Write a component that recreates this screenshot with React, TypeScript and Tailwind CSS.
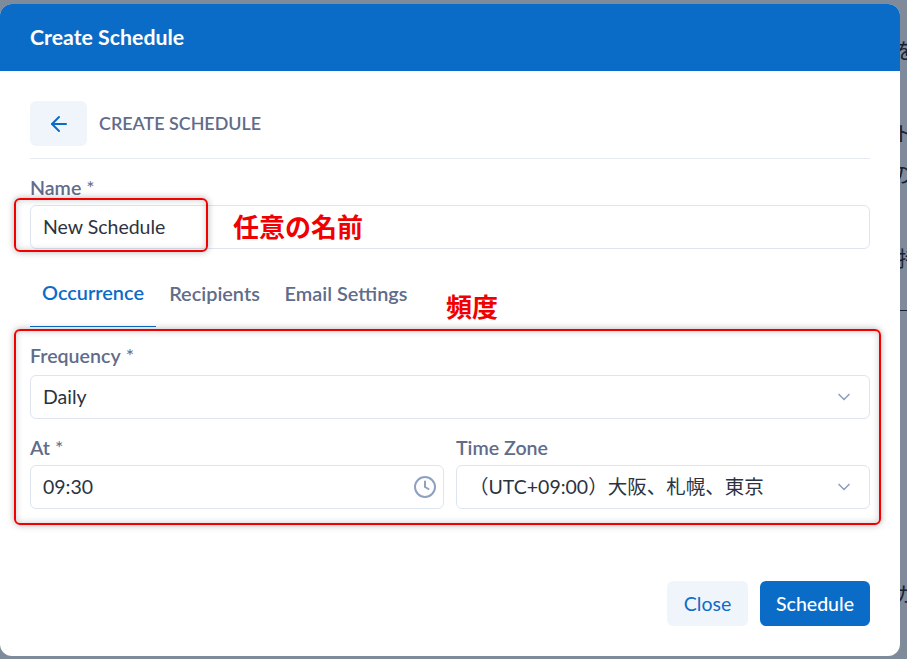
import { ArrowLeft, ChevronDown } from "lucide-react";

const FONT = "font-['Lato','Noto_Sans_CJK_JP',sans-serif]";

function Label({ text, required }: { text: string; required?: boolean }) {
  return (
    <div className="h-[22px] text-[19.6px] leading-[22px] font-semibold text-[#5f6c8a]">
      {text}
      {required && <span className="font-normal"> *</span>}
    </div>
  );
}

function Field({ children }: { children: React.ReactNode }) {
  return (
    <div className="flex h-[44px] items-center rounded-[6px] border border-[#dde5f1] bg-white pl-[12px] pr-[15px] text-[19.5px] text-[#2c3340]">
      {children}
    </div>
  );
}

function BackgroundGlyphs() {
  return (
    <div className="absolute inset-y-0 left-[900px] right-0 overflow-hidden text-[21px] leading-none text-[#1a2030]">
      <span className="absolute left-[-5px] top-[39px]">を</span>
      <span className="absolute left-[-7px] top-[122px]">ト</span>
      <span className="absolute left-[-9px] top-[163px]">の</span>
      <span className="absolute left-[-2px] top-[247px]">持</span>
      <span className="absolute left-[-6px] top-[583px]">カ</span>
      <div className="absolute left-0 top-[310px] h-px w-full bg-[#1a2030]" />
    </div>
  );
}

export default function App() {
  return (
    <div className={`relative h-[659px] w-[907px] overflow-hidden bg-[#7f8a9b] pt-[4px] ${FONT}`}>
      <BackgroundGlyphs />

      <div className="relative flex h-[652px] w-[900px] flex-col overflow-hidden rounded-[12px] bg-white">
        <div className="flex h-[67px] items-center bg-[#0b6cc8] px-[30px] pt-[1px] text-[21.3px] font-bold text-white">
          Create Schedule
        </div>

        <div className="flex flex-1 flex-col px-[30px] pt-[30px]">
          <div className="flex h-[45px] items-center gap-[12px]">
            <button
              type="button"
              className="flex h-[45px] w-[57px] items-center justify-center rounded-[6px] bg-[#f0f5fc] text-[#0b6cc8]"
            >
              <ArrowLeft className="h-[24px] w-[24px]" strokeWidth={2} />
            </button>
            <span className="pb-[1px] text-[17.9px] font-semibold text-[#5f6c8a]">CREATE SCHEDULE</span>
          </div>
          <div className="mt-[12px] h-px bg-[#e6eaf3]" />

          <div className="mt-[18px]">
            <Label text="Name" required />
          </div>
          <div className="mt-[6px]">
            <Field>New Schedule</Field>
          </div>

          <div className="mt-[11px] flex h-[67px] gap-px text-[19.9px] font-semibold">
            <div className="flex w-[126px] items-center justify-center border-b-[1.5px] border-[#0b6cc8] text-[#0b6cc8]">
              Occurrence
            </div>
            <div className="flex w-[115px] items-center justify-center text-[#5f6c8a]">Recipients</div>
            <div className="flex w-[146px] items-center justify-center text-[#5f6c8a]">Email Settings</div>
          </div>

          <div className="mt-[18px]">
            <Label text="Frequency" required />
          </div>
          <div className="mt-[8px]">
            <Field>
              <span className="flex-1">Daily</span>
              <ChevronDown className="h-[20px] w-[20px] text-[#8fa0c0]" />
            </Field>
          </div>

          <div className="mt-[18px] grid grid-cols-2 gap-[12px]">
            <div>
              <Label text="At" required />
              <div className="mt-[6px]">
                <Field>
                  <span className="flex-1">09:30</span>
                  <svg viewBox="0 0 24 24" className="mr-[-9px] h-[24px] w-[24px] text-[#8fa0c0]" fill="none" stroke="currentColor" strokeWidth="2" strokeLinecap="round">
                    <circle cx="12" cy="12" r="10" />
                    <path d="M12 6.5V12l3.5 2" />
                  </svg>
                </Field>
              </div>
            </div>
            <div>
              <Label text="Time Zone" />
              <div className="mt-[6px]">
                <Field>
                  <span className="flex-1">（UTC+09:00）大阪、札幌、東京</span>
                  <ChevronDown className="h-[20px] w-[20px] text-[#8fa0c0]" />
                </Field>
              </div>
            </div>
          </div>

          <div className="mt-[72px] flex justify-end gap-[12px] text-[19.5px]">
            <button type="button" className="h-[45px] w-[81px] rounded-[6px] bg-[#f0f5fc] text-[#0b6cc8]">
              Close
            </button>
            <button type="button" className="h-[45px] w-[110px] rounded-[6px] bg-[#0b6cc8] font-medium text-white">
              Schedule
            </button>
          </div>
        </div>
      </div>

      {/* annotations drawn over the screenshot */}
      <div className="absolute left-[14px] top-[198px] h-[54px] w-[194px] rounded-[6px] border-2 border-[#f00000] shadow-[0_0_7px_rgba(0,0,0,0.3),inset_0_0_7px_rgba(0,0,0,0.2)]" />
      <div className="absolute left-[14px] top-[329px] h-[196px] w-[867px] rounded-[6px] border-2 border-[#f00000] shadow-[0_0_7px_rgba(0,0,0,0.3),inset_0_0_7px_rgba(0,0,0,0.2)]" />
      <span className="absolute left-[233px] top-[211px] font-['Noto_Sans_CJK_JP',sans-serif] text-[26px] leading-[30px] font-bold text-[#f00000]">
        任意の名前
      </span>
      <span className="absolute left-[446px] top-[291px] font-['Noto_Sans_CJK_JP',sans-serif] text-[26px] leading-[30px] font-bold text-[#f00000]">
        頻度
      </span>
    </div>
  );
}
